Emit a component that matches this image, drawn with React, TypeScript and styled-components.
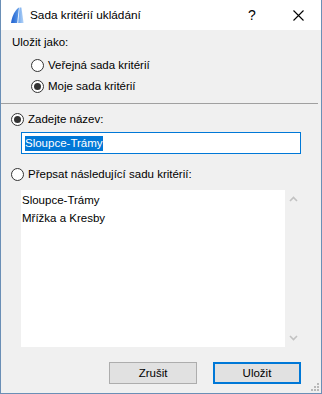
import React from "react";
import styled, { createGlobalStyle } from "styled-components";

const Global = createGlobalStyle`
  html, body { margin: 0; padding: 0; background: #ffffff; }
  body { font-family: "Liberation Sans", Arial, sans-serif; font-size: 11.5px; color: #000; }
  * { box-sizing: border-box; }
`;

const Window = styled.div`
  width: 322px;
  height: 394px;
  display: flex;
  flex-direction: column;
  border: 1px solid #6a8fb6;
  border-top: none;
  background: #f0f0f0;
  position: relative;
`;

const TitleBar = styled.div`
  height: 30px;
  background: #ffffff;
  display: flex;
  align-items: center;
  padding-left: 8px;
`;

const TitleText = styled.div`
  margin-left: 5px;
  font-size: 11.8px;
  color: #000;
  flex: 1;
  padding-bottom: 1px;
`;

const TitleButton = styled.div<{ $w: number }>`
  width: ${(p) => p.$w}px;
  height: 30px;
  display: flex;
  align-items: center;
  justify-content: center;
  font-size: 14px;
  color: #000;
`;

const Content = styled.div`
  flex: 1;
  display: flex;
  flex-direction: column;
`;

const Label = styled.div`
  margin: 4px 0 0 11px;
  height: 16px;
  line-height: 16px;
`;

const RadioRow = styled.label<{ $indent: number; $mt: number }>`
  display: flex;
  align-items: center;
  gap: 4px;
  height: 16px;
  line-height: 16px;
  margin-left: ${(p) => p.$indent}px;
  margin-top: ${(p) => p.$mt}px;
`;

const Radio = styled.span<{ $checked?: boolean }>`
  width: 13px;
  height: 13px;
  border-radius: 50%;
  border: 1px solid #333333;
  background: #ffffff;
  display: flex;
  align-items: center;
  justify-content: center;
  flex: none;
  &::after {
    content: "";
    width: 7px;
    height: 7px;
    border-radius: 50%;
    background: #333333;
    display: ${(p) => (p.$checked ? "block" : "none")};
  }
`;

const Divider = styled.div`
  height: 1px;
  background: #a0a0a0;
  margin: 9px 3px 0 0;
`;

const TextInput = styled.div`
  margin: 5px 0 0 20px;
  width: 280px;
  height: 22px;
  border: 1px solid #0078d7;
  background: #ffffff;
  display: flex;
  align-items: center;
  padding-left: 3px;
`;

const Selected = styled.span`
  background: #0078d7;
  color: #ffffff;
  line-height: 15px;
  height: 15px;
  display: inline-block;
`;

const ListArea = styled.div`
  margin: 8px 0 0 20px;
  width: 280px;
  height: 157px;
  display: flex;
`;

const ListBox = styled.div`
  flex: 1;
  background: #ffffff;
  padding: 1px 0 0 1px;
`;

const ListItem = styled.div`
  height: 18px;
  line-height: 18px;
`;

const ScrollBar = styled.div`
  width: 16px;
  display: flex;
  flex-direction: column;
  justify-content: space-between;
  align-items: center;
  padding: 6px 0 6px 0;
`;

const ButtonRow = styled.div`
  margin-top: 15px;
  display: flex;
  justify-content: flex-end;
  gap: 16px;
  padding-right: 20px;
`;

const Button = styled.div<{ $default?: boolean }>`
  width: 88px;
  height: 22px;
  background: #e1e1e1;
  border: ${(p) => (p.$default ? "2px solid #0078d7" : "1px solid #adadad")};
  display: flex;
  align-items: center;
  justify-content: center;
`;

const Grip = styled.svg`
  position: absolute;
  right: 1px;
  bottom: 1px;
`;

const Logo = () => (
  <svg width="16" height="16" viewBox="0 0 16 16">
    <defs>
      <linearGradient id="lg1" x1="0" y1="0" x2="1" y2="0">
        <stop offset="0" stopColor="#1f5fcf" />
        <stop offset="1" stopColor="#5c9ae8" />
      </linearGradient>
      <linearGradient id="lg2" x1="0" y1="0" x2="1" y2="0">
        <stop offset="0" stopColor="#6ea6ee" />
        <stop offset="1" stopColor="#b6d4f6" />
      </linearGradient>
    </defs>
    <path d="M2 16 C3 9 6 3 10 0.5 L8.2 16 Z" fill="url(#lg1)" />
    <path d="M10.6 0.5 L12.4 0.5 L14.6 16 L9.2 16 Z" fill="url(#lg2)" />
  </svg>
);

const Chevron = ({ up }: { up?: boolean }) => (
  <svg width="9" height="6" viewBox="0 0 9 6">
    <path
      d={up ? "M1 5 L4.5 1.5 L8 5" : "M1 1 L4.5 4.5 L8 1"}
      stroke="#c2c2c2"
      strokeWidth="1.6"
      fill="none"
    />
  </svg>
);

export default function App() {
  return (
    <>
      <Global />
      <Window>
        <TitleBar>
          <Logo />
          <TitleText>Sada kritérií ukládání</TitleText>
          <TitleButton $w={46}>?</TitleButton>
          <TitleButton $w={46}>
            <svg width="11" height="11" viewBox="0 0 11 11">
              <path d="M0.5 0.5 L10.5 10.5 M10.5 0.5 L0.5 10.5" stroke="#000" strokeWidth="1.1" />
            </svg>
          </TitleButton>
        </TitleBar>
        <Content>
          <Label>Uložit jako:</Label>
          <RadioRow $indent={30} $mt={7}>
            <Radio />
            Veřejná sada kritérií
          </RadioRow>
          <RadioRow $indent={30} $mt={5}>
            <Radio $checked />
            Moje sada kritérií
          </RadioRow>
          <Divider />
          <RadioRow $indent={10} $mt={7}>
            <Radio $checked />
            Zadejte název:
          </RadioRow>
          <TextInput>
            <Selected>Sloupce-Trámy</Selected>
          </TextInput>
          <RadioRow $indent={10} $mt={12}>
            <Radio />
            Přepsat následující sadu kritérií:
          </RadioRow>
          <ListArea>
            <ListBox>
              <ListItem>Sloupce-Trámy</ListItem>
              <ListItem>Mřížka a Kresby</ListItem>
            </ListBox>
            <ScrollBar>
              <Chevron up />
              <Chevron />
            </ScrollBar>
          </ListArea>
          <ButtonRow>
            <Button>Zrušit</Button>
            <Button $default>Uložit</Button>
          </ButtonRow>
        </Content>
        <Grip width="10" height="10" viewBox="0 0 10 10">
          {[
            [8, 2],
            [8, 5],
            [5, 5],
            [8, 8],
            [5, 8],
            [2, 8],
          ].map(([x, y], i) => (
            <rect key={i} x={x - 1} y={y - 1} width="2" height="2" fill="#b8b8b8" />
          ))}
        </Grip>
      </Window>
    </>
  );
}
